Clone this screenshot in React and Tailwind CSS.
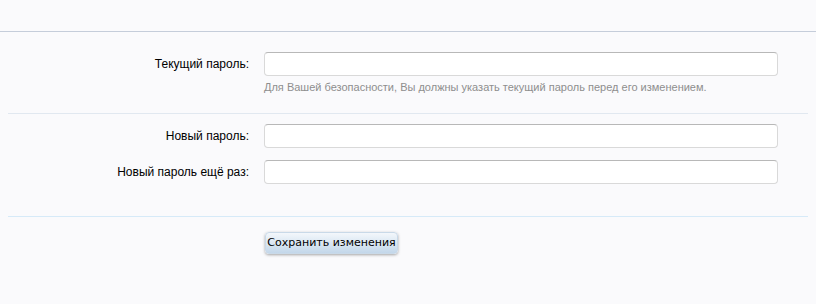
export default function App() {
  return (
    <div className="w-[816px] h-[304px] bg-[#fafafc] font-['Liberation_Sans',Arial,sans-serif] text-[12px] text-black">
      <div className="h-[31px]" />
      <div className="h-px bg-[#c5cdda]" />
      <form className="px-2 pt-[20px]">
        <div className="flex items-start gap-[15px]">
          <label className="w-[241px] h-[24px] leading-[24px] text-right">Текущий пароль:</label>
          <div>
            <input type="password" className="block w-[514px] h-[24px] bg-white border border-[#d9d9d9] border-t-[#b8b8b8] rounded-[4px]" />
            <p className="mt-[4px] text-[11px] leading-[14px] text-[#8e8e8e]">
              Для Вашей безопасности, Вы должны указать текущий пароль перед его изменением.
            </p>
          </div>
        </div>
        <div className="mt-[19px] h-px bg-[#e1e8f0]" />
        <div className="mt-[10px] flex flex-col gap-[12px]">
          <div className="flex items-center gap-[15px]">
            <label className="w-[241px] text-right">Новый пароль:</label>
            <input type="password" className="block w-[514px] h-[24px] bg-white border border-[#d9d9d9] border-t-[#b8b8b8] rounded-[4px]" />
          </div>
          <div className="flex items-center gap-[15px]">
            <label className="w-[241px] text-right">Новый пароль ещё раз:</label>
            <input type="password" className="block w-[514px] h-[24px] bg-white border border-[#d9d9d9] border-t-[#b8b8b8] rounded-[4px]" />
          </div>
        </div>
        <div className="mt-[32px] h-px bg-[#d6eaf8]" />
        <div className="mt-[15px] pl-[257px]">
          <button type="button" className="h-[22px] w-[133px] rounded-[4px] border border-[#c9d9e8] bg-gradient-to-b from-[#f3f7fb] to-[#c3d7ea] font-['DejaVu_Sans',Tahoma,sans-serif] text-[11px] text-black shadow-[0_1px_3px_rgba(0,0,0,0.35)]">
            Сохранить изменения
          </button>
        </div>
      </form>
    </div>
  );
}
